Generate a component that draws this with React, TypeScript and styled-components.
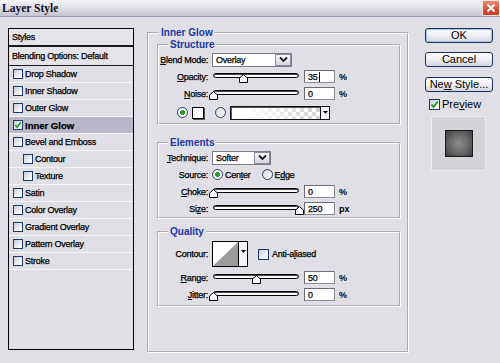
import React from 'react';
import styled, { createGlobalStyle } from 'styled-components';

const SANS = `"Liberation Sans", Arial, sans-serif`;
const SERIF = `"Liberation Serif", "Times New Roman", serif`;

const GlobalStyle = createGlobalStyle`
  html, body {
    margin: 0;
    padding: 0;
    background: #dfdfe5;
  }
  body {
    font-family: ${SANS};
    font-size: 9px;
    letter-spacing: -0.25px;
    color: #000;
    -webkit-text-stroke: 0.25px #000;
  }
  * {
    box-sizing: border-box;
  }
`;

const Dialog = styled.div`
  width: 500px;
  height: 363px;
  display: flex;
  flex-direction: column;
  background: #dfdfe5;
  overflow: hidden;
`;

const TitleBar = styled.div`
  height: 17px;
  flex-shrink: 0;
  display: flex;
  align-items: flex-start;
  justify-content: space-between;
  background: linear-gradient(#f4f4f8, #dcdce6 55%, #c4c4d2);
  border-bottom: 1px solid #9a9aae;
`;

const Title = styled.div`
  font-family: ${SERIF};
  font-weight: bold;
  font-size: 11.5px;
  letter-spacing: 0;
  line-height: 16px;
  color: #0c0c1c;
  -webkit-text-stroke: 0;
  padding-left: 2px;
`;

const CloseButton = styled.div`
  width: 18px;
  height: 16px;
  display: flex;
  align-items: center;
  justify-content: center;
  border: 1px solid #f4e4e0;
  border-radius: 2px;
  background: linear-gradient(#e88a78, #d4543e 55%, #c0402c);
`;

const Body = styled.div`
  flex: 1;
  display: flex;
  align-items: flex-start;
  padding: 10px 0 0 8px;
`;

/* ---------- styles list ---------- */

const StylesPanel = styled.div`
  width: 126px;
  height: 322px;
  margin-top: 1px;
  border: 1px solid #000;
  background: #dfdfe5;
  display: flex;
  flex-direction: column;
`;

const PanelHeader = styled.div<{ $h: number; $line: number }>`
  height: ${(p) => p.$h}px;
  display: flex;
  align-items: center;
  padding-left: 3px;
  border-bottom: ${(p) => p.$line}px solid #1a1a1a;
  background: #e4e4ea;
`;

const StyleRow = styled.div<{ $active?: boolean; $indent?: boolean }>`
  height: 17px;
  display: flex;
  align-items: center;
  gap: 2px;
  padding-left: ${(p) => (p.$indent ? 14 : 4)}px;
  border-bottom: 1px solid #f6f6f9;
  background: ${(p) => (p.$active ? '#b8b8c8' : 'transparent')};
  font-weight: ${(p) => (p.$active ? 'bold' : 'normal')};
  font-size: ${(p) => (p.$active ? '9.5px' : '9px')};
  letter-spacing: ${(p) => (p.$active ? '0' : '-0.25px')};
`;

const CheckBox = styled.span<{ $size: number }>`
  width: ${(p) => p.$size}px;
  height: ${(p) => p.$size}px;
  flex-shrink: 0;
  display: inline-flex;
  align-items: center;
  justify-content: center;
  border: 1px solid #1d3a6a;
  background: linear-gradient(135deg, #c4ccd8, #eef0f4 60%, #fff);
`;

const Check = ({ size, checked }: { size: number; checked?: boolean }) => (
  <CheckBox $size={size}>
    {checked && (
      <svg width={size - 2} height={size - 2} viewBox="0 0 9 9">
        <path d="M1.5 4.5 L3.5 7 L7.8 1.5" fill="none" stroke="#1e9a1e" strokeWidth="1.8" />
      </svg>
    )}
  </CheckBox>
);

/* ---------- group boxes ---------- */

const MainGroup = styled.fieldset`
  width: 262px;
  height: 326px;
  margin: 0 0 0 13px;
  padding: 0 6px 0 8px;
  min-width: 0;
  border: 2px groove #fff;
`;

const SubGroup = styled.fieldset<{ $mt: number; $pb?: number }>`
  margin: ${(p) => p.$mt}px 0 0 0;
  padding: 0 0 ${(p) => p.$pb ?? 0}px 0;
  min-width: 0;
  border: 2px groove #fff;
`;

const Legend = styled.legend<{ $ml: number }>`
  margin-left: ${(p) => p.$ml}px;
  padding: 0 2px;
  font-weight: bold;
  font-size: 10px;
  letter-spacing: 0;
  line-height: 12px;
  color: #1c37a6;
  -webkit-text-stroke: 0;
`;

const FieldRow = styled.div<{ $h?: number; $mt?: number }>`
  height: ${(p) => p.$h ?? 17}px;
  margin-top: ${(p) => p.$mt ?? 0}px;
  display: flex;
  align-items: center;
`;

const Label = styled.span`
  width: 49px;
  margin-right: 4px;
  text-align: right;
  white-space: nowrap;
`;

const SliderWrap = styled.div`
  position: relative;
  width: 86px;
  height: 12px;
  margin-left: 1px;
`;

const Track = styled.div`
  height: 5px;
  margin-top: 2px;
  border: 1px solid #000;
  border-radius: 3px;
  background: #fafafa;
  box-shadow: inset 0 1px 0 #444;
`;

const Thumb = styled.div`
  position: absolute;
  top: 3px;
  width: 9px;
  height: 9px;
  margin-left: -4.5px;
  line-height: 0;
`;

const NumberBox = styled.div`
  width: 31px;
  height: 13px;
  margin-left: 5px;
  padding-left: 3px;
  display: flex;
  align-items: center;
  background: #fff;
  border: 1px solid #8a8a96;
  border-top-color: #6c6c78;
  border-left-color: #6c6c78;
`;

const Caret = styled.span`
  width: 1px;
  height: 10px;
  background: #000;
  margin-left: 1px;
`;

const Unit = styled.span`
  margin-left: 4px;
  font-weight: bold;
  font-size: 9px;
  letter-spacing: 0;
  -webkit-text-stroke: 0;
`;

const Select = styled.div<{ $w: number }>`
  width: ${(p) => p.$w}px;
  height: 14px;
  display: flex;
  align-items: center;
  justify-content: space-between;
  padding-left: 3px;
  background: #fff;
  border: 1px solid #7c7c88;
`;

const SelectArrow = styled.span`
  width: 16px;
  height: 12px;
  display: flex;
  align-items: center;
  justify-content: center;
  border: 1px solid #8a8aa0;
  background: linear-gradient(#fbfbfe, #d6d6e2);
`;

const Radio = styled.span<{ $ml: number; $on?: boolean }>`
  width: 11px;
  height: 11px;
  margin-left: ${(p) => p.$ml}px;
  flex-shrink: 0;
  border-radius: 50%;
  border: 1px solid #283c60;
  background: ${(p) =>
    p.$on
      ? 'radial-gradient(circle, #22a322 0 2.2px, #fbfbfd 2.6px)'
      : 'linear-gradient(135deg, #d4d8e0, #fff)'};
`;

const RadioText = styled.span<{ $ml: number }>`
  margin-left: ${(p) => p.$ml}px;
`;

const Swatch = styled.span`
  width: 12px;
  height: 12px;
  margin-left: 4px;
  background: #fff;
  border: 1px solid #000;
  box-shadow: 1px 1px 0 #555;
`;

const GradientPicker = styled.div`
  width: 100px;
  height: 14px;
  margin-left: 4px;
  display: flex;
  border: 1px solid #111;
  box-shadow: inset 1px 1px 0 #555;
`;

const GradientFill = styled.div`
  flex: 1;
  margin: 1px 0 0 1px;
  background: linear-gradient(to right, #fff 15%, rgba(255, 255, 255, 0) 100%),
    repeating-conic-gradient(#d2d2d2 0 25%, #fff 0 50%) 0 0 / 8px 8px;
`;

const PickerArrow = styled.div`
  width: 9px;
  display: flex;
  justify-content: center;
  padding-top: 4px;
  border-left: 1px solid #111;
  background: #f4f4f8;
`;

const ContourPicker = styled.div`
  width: 36px;
  height: 26px;
  display: flex;
  border: 1px solid #000;
  background: #fff;
`;

const ContourArrow = styled.div`
  width: 9px;
  display: flex;
  justify-content: center;
  padding-top: 8px;
  border-left: 1px solid #000;
  background: #f4f4f8;
`;

const Spacer = styled.span<{ $w: number }>`
  width: ${(p) => p.$w}px;
`;

const CheckText = styled.span`
  margin-left: 3px;
`;

/* ---------- right column ---------- */

const SideColumn = styled.div`
  width: 68px;
  margin-left: 16px;
  padding-top: 1px;
  display: flex;
  flex-direction: column;
`;

const Button = styled.button<{ $default?: boolean; $mt: number }>`
  width: 68px;
  height: 15px;
  margin-top: ${(p) => p.$mt}px;
  padding: 0;
  font-family: ${SANS};
  font-size: 11px;
  letter-spacing: 0;
  line-height: 13px;
  color: #000;
  -webkit-text-stroke: 0;
  border: 1px solid #1f2f5c;
  border-radius: 3px;
  background: linear-gradient(#ffffff, #eeeef4 50%, #d4d4de);
  box-shadow: ${(p) => (p.$default ? 'inset 0 0 0 1px #a8c0ea' : 'none')};
`;

const PreviewToggle = styled.div`
  margin: 6px 0 0 4px;
  height: 12px;
  display: flex;
  align-items: center;
  font-size: 11px;
  letter-spacing: 0;
  -webkit-text-stroke: 0;
`;

const PreviewText = styled.span`
  margin-left: 2px;
`;

const PreviewBox = styled.div`
  width: 55px;
  height: 55px;
  margin: 6px 0 0 6px;
  display: flex;
  align-items: center;
  justify-content: center;
  background: #d4d4d8;
  border: 1px solid #ececf0;
`;

const PreviewTile = styled.div`
  width: 28px;
  height: 27px;
  border: 1px solid #1a1a1a;
  background: radial-gradient(circle, #8e8e8e 0%, #666 55%, #3e3e3e 100%);
`;

const Chevron = () => (
  <svg width="9" height="7" viewBox="0 0 9 7">
    <path d="M1 1.5 L4.5 5 L8 1.5" fill="none" stroke="#1a1a1a" strokeWidth="1.8" />
  </svg>
);

const DownTri = () => (
  <svg width="5" height="3" viewBox="0 0 5 3">
    <path d="M0 0 H5 L2.5 3 Z" fill="#000" />
  </svg>
);

const Slider = ({ value }: { value: number }) => (
  <SliderWrap>
    <Track />
    <Thumb style={{ left: `${value}%` }}>
      <svg width="9" height="9" viewBox="0 0 9 9">
        <path d="M4.5 0.6 L8.5 4 V8.5 H0.5 V4 Z" fill="#fff" stroke="#000" />
      </svg>
    </Thumb>
  </SliderWrap>
);

const SliderField = ({
  label,
  value,
  text,
  unit,
  caret,
  mt,
}: {
  label: React.ReactNode;
  value: number;
  text: string;
  unit: string;
  caret?: boolean;
  mt?: number;
}) => (
  <FieldRow $mt={mt}>
    <Label>{label}</Label>
    <Slider value={value} />
    <NumberBox>
      {text}
      {caret && <Caret />}
    </NumberBox>
    <Unit>{unit}</Unit>
  </FieldRow>
);

const styleItems = [
  { label: 'Drop Shadow' },
  { label: 'Inner Shadow' },
  { label: 'Outer Glow' },
  { label: 'Inner Glow', active: true },
  { label: 'Bevel and Emboss' },
  { label: 'Contour', indent: true },
  { label: 'Texture', indent: true },
  { label: 'Satin' },
  { label: 'Color Overlay' },
  { label: 'Gradient Overlay' },
  { label: 'Pattern Overlay' },
  { label: 'Stroke' },
];

export default function App() {
  return (
    <>
      <GlobalStyle />
      <Dialog>
        <TitleBar>
          <Title>Layer Style</Title>
          <CloseButton>
            <svg width="10" height="10" viewBox="0 0 10 10">
              <path d="M1.5 1.5 L8.5 8.5 M8.5 1.5 L1.5 8.5" stroke="#fff" strokeWidth="2" />
            </svg>
          </CloseButton>
        </TitleBar>

        <Body>
          <StylesPanel>
            <PanelHeader $h={18} $line={2}>Styles</PanelHeader>
            <PanelHeader $h={19} $line={1}>Blending Options: Default</PanelHeader>
            {styleItems.map((item) => (
              <StyleRow key={item.label} $active={item.active} $indent={item.indent}>
                <Check size={10} checked={item.active} />
                {item.label}
              </StyleRow>
            ))}
          </StylesPanel>

          <MainGroup>
            <Legend $ml={2}>Inner Glow</Legend>

            <SubGroup $mt={0}>
              <Legend $ml={9}>Structure</Legend>
              <FieldRow>
                <Label>
                  <u>B</u>lend Mode:
                </Label>
                <Select $w={80}>
                  Overlay
                  <SelectArrow>
                    <Chevron />
                  </SelectArrow>
                </Select>
              </FieldRow>
              <SliderField
                label={<><u>O</u>pacity:</>}
                value={35}
                text="35"
                unit="%"
                caret
              />
              <SliderField label={<><u>N</u>oise:</>} value={0} text="0" unit="%" />
              <FieldRow $h={21}>
                <Radio $ml={18} $on />
                <Swatch />
                <Radio $ml={11} />
                <GradientPicker>
                  <GradientFill />
                  <PickerArrow>
                    <DownTri />
                  </PickerArrow>
                </GradientPicker>
              </FieldRow>
            </SubGroup>

            <SubGroup $mt={12}>
              <Legend $ml={9}>Elements</Legend>
              <FieldRow>
                <Label>
                  <u>T</u>echnique:
                </Label>
                <Select $w={59}>
                  Softer
                  <SelectArrow>
                    <Chevron />
                  </SelectArrow>
                </Select>
              </FieldRow>
              <FieldRow>
                <Label>Source:</Label>
                <Radio $ml={0} $on />
                <RadioText $ml={2}>
                  Cen<u>t</u>er
                </RadioText>
                <Radio $ml={11} />
                <RadioText $ml={2}>
                  E<u>d</u>ge
                </RadioText>
              </FieldRow>
              <SliderField label={<><u>C</u>hoke:</>} value={0} text="0" unit="%" />
              <SliderField label={<>Si<u>z</u>e:</>} value={100} text="250" unit="px" />
            </SubGroup>

            <SubGroup $mt={7} $pb={2}>
              <Legend $ml={9}>Quality</Legend>
              <FieldRow $h={26} $mt={3}>
                <Label>Contour:</Label>
                <ContourPicker>
                  <svg width="25" height="24" viewBox="0 0 25 24">
                    <path d="M0 24 L25 0 V24 Z" fill="#9c9c9c" />
                  </svg>
                  <ContourArrow>
                    <DownTri />
                  </ContourArrow>
                </ContourPicker>
                <Spacer $w={10} />
                <Check size={11} />
                <CheckText>
                  Anti-a<u>l</u>iased
                </CheckText>
              </FieldRow>
              <SliderField label={<><u>R</u>ange:</>} value={50} text="50" unit="%" mt={2} />
              <SliderField label={<><u>J</u>itter:</>} value={0} text="0" unit="%" />
            </SubGroup>
          </MainGroup>

          <SideColumn>
            <Button $default $mt={0}>OK</Button>
            <Button $mt={9}>Cancel</Button>
            <Button $mt={10}>
              Ne<u>w</u> Style...
            </Button>
            <PreviewToggle>
              <Check size={11} checked />
              <PreviewText>
                Pre<u>v</u>iew
              </PreviewText>
            </PreviewToggle>
            <PreviewBox>
              <PreviewTile />
            </PreviewBox>
          </SideColumn>
        </Body>
      </Dialog>
    </>
  );
}
